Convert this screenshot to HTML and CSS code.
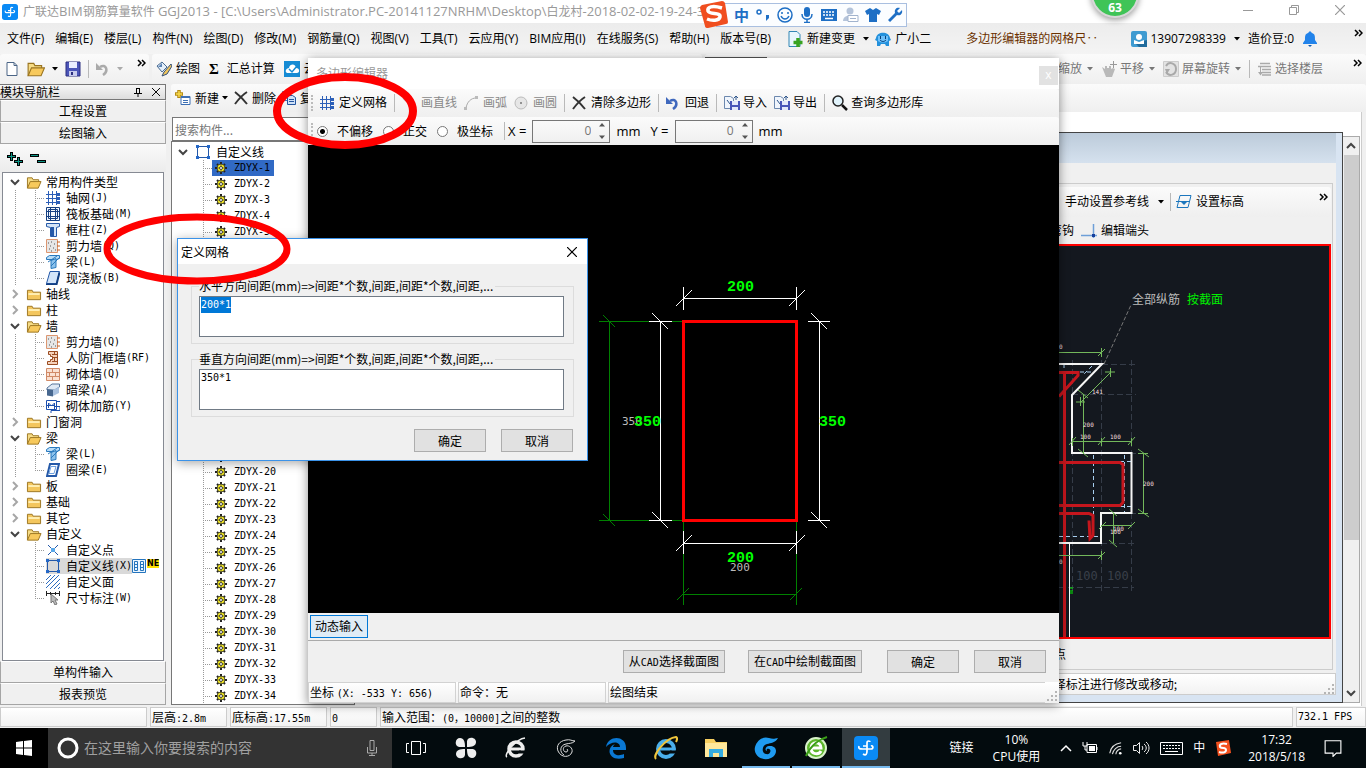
FILE: index.html
```html
<!DOCTYPE html>
<html lang="zh-CN">
<head>
<meta charset="utf-8">
<title>广联达BIM钢筋算量软件 GGJ2013</title>
<link rel="stylesheet" href="styles.css">
</head>
<body>
<svg class="defs" aria-hidden="true">
  <symbol id="i-open" viewBox="0 0 16 16"><path d="M1 14V3h5l1 2h6v3" fill="#f6dc86" stroke="#9a7420"/><path d="M1 14l3-7h11.500l-3 7z" fill="#f7c95c" stroke="#9a7420"/></symbol>
  <symbol id="i-folder" viewBox="0 0 16 16"><path d="M1 13.500V3.500h5l1 2h8v8z" fill="#f3c65d" stroke="#9a7420"/><path d="M2 6.500h12v2H2z" fill="#fff0b5"/></symbol>
  <symbol id="i-down" viewBox="0 0 12 12"><path d="M2 4l4 4 4-4" fill="none" stroke="#444" stroke-width="2"/></symbol>
  <symbol id="i-right" viewBox="0 0 12 12"><path d="M4 2l4 4-4 4" fill="none" stroke="#a6a6a6" stroke-width="2"/></symbol>
  <symbol id="i-grid" viewBox="0 0 14 14"><path d="M2.500 0v14M6.500 0v14M10.500 0v14M0 3.500h12M0 7.500h12M0 11.500h12" stroke="#2c5fb8" fill="none"/><path d="M11 2h3v3h-3zM11 6h3v3h-3zM11 10h3v3h-3z" fill="#2c5fb8"/></symbol>
  <symbol id="i-raft" viewBox="0 0 14 14"><path d="M.5.5h13v13H.5zM2.500 2.500h9v9h-9zM4.500 1v12M9.500 1v12M1 4.500h12M1 9.500h12" fill="#dce9fa" fill-opacity=".3" stroke="#153f82"/></symbol>
  <symbol id="i-col" viewBox="0 0 14 14"><path d="M.5.500h13v3l-3 1v9h-6v-9l-4-1z" fill="#d5e5f7" stroke="#2559a8"/><path d="M5 4h3v9H5z" fill="#2559a8"/></symbol>
  <symbol id="i-wall" viewBox="0 0 14 14"><path d="M.5.500h11v13H.5z" fill="#e6e6e6" stroke="#dc9670"/><path d="M2 4h1M5 3h1M8 5h1M4 7h1M7 9h1M3 10h1M9 11h1M5 12h1" stroke="#555"/><path d="M11 3h3M11 7h3M11 11h3" stroke="#c66325"/></symbol>
  <symbol id="i-beam" viewBox="0 0 14 14"><path d="M.5 4.500V2.500l3-2h10v3l-3 1z" fill="#b9dcf6" stroke="#2979bd"/><path d="M5 5.500l5-2v9l-5 1z" fill="#8cc2ec" stroke="#2979bd"/><path d="M2 7l9-6M5 11l8-8" stroke="#2979bd"/></symbol>
  <symbol id="i-slab" viewBox="0 0 14 14"><path d="M4 .5h9.500l-3 12H.5z" fill="#d4e6fa" stroke="#2559a8"/><path d="M.5 12.500v1h10l3-12" fill="none" stroke="#123f82" stroke-width="2"/></symbol>
  <symbol id="i-ring" viewBox="0 0 14 14"><path d="M4 1h9l-3 12H1z" fill="none" stroke="#2559a8" stroke-width="2"/><path d="M5 3.500h5l-2 7H3z" fill="#fff" stroke="#6da0df"/></symbol>
  <symbol id="i-door" viewBox="0 0 14 14"><path d="M2.500.500h9v13h-10v-3h3v-2h2v-3h-2v-2h-2z" fill="#f5d2ba" stroke="#9b4c22"/><path d="M6 3.500h5M6 6.500h5M6 10.500h5M8.500 1v2M8.500 7v3" stroke="#9b4c22"/></symbol>
  <symbol id="i-brick" viewBox="0 0 14 14"><path d="M.5 1.500h13v12H.5zM1 5.500h12M1 9.500h12M6.500 2v3M3.500 6v3M9.500 6v3M6.500 10v3" fill="#fae1d2" stroke="#d08a67"/></symbol>
  <symbol id="i-dark" viewBox="0 0 14 14"><path d="M1 5l5-4h7.500v3l-5 3H1z" fill="#dfe9f5" stroke="#56749a"/><path d="M1 6l6 1v6.500l-6-1z" fill="#47678f"/><path d="M7 7l6-3v6l-6 3z" fill="#aac2e0"/></symbol>
  <symbol id="i-rebar" viewBox="0 0 14 14"><path d="M.5 1.500h10v9H.5zM2.500 9V4l3 3 3-3v8M11 2.500h3M9 7.500h5v4H5v3M0 6.500h9" fill="none" stroke="#1c4fae"/></symbol>
  <symbol id="i-point" viewBox="0 0 14 14"><path d="M2 2l10 10M12 2L2 12" stroke="#2458a8"/><path d="M5 5h4v4H5z" fill="#59a7e9"/></symbol>
  <symbol id="i-line" viewBox="0 0 14 14"><path d="M1.500 1.500h11v11h-11z" fill="none" stroke="#2458a8"/><path d="M0 0h3v3H0zM11 0h3v3h-3zM0 11h3v3H0zM11 11h3v3h-3z" fill="#2468c8"/></symbol>
  <symbol id="i-area" viewBox="0 0 14 14"><path d="M0 5l5-5M0 9l9-9M0 13l13-13M4 14L14 4M8 14l6-6M12 14l2-2" stroke="#2c6cc0"/></symbol>
  <symbol id="i-dim" viewBox="0 0 14 14"><path d="M.5 0v5M13.500 0v5M0 2.500h14M4.500 1v3M9.500 1v3" stroke="#222"/><path d="M5 3v9l2-2 2 4 2-1-2-4h3z" fill="#bbb" stroke="#777"/></symbol>
  <symbol id="i-gear" viewBox="0 0 12 12"><path d="M6 0v12M0 6h12M2 2l8 8M10 2l-8 8" stroke="#222" stroke-width="2"/><circle cx="6" cy="6" r="4" fill="#f5ea1d" stroke="#333" stroke-width=".8"/><path d="M6 2v8M2 6h8" stroke="#333" stroke-width=".6"/><circle cx="6" cy="6" r="1.500" fill="#fff" stroke="#222" stroke-width=".8"/></symbol>
  <symbol id="i-caret" viewBox="0 0 6 4"><path d="M0 0h6L3 3.500z" fill="currentColor"/></symbol>
  <symbol id="i-more" viewBox="0 0 9 8"><path d="M1 1l3 3-3 3M5 1l3 3-3 3" fill="none" stroke="#000" stroke-width="1.500"/></symbol>
  <symbol id="i-del" viewBox="0 0 14 14"><path d="M1 1c4 3 8 7 12 12M13 1C8 4 4 9 1 13" fill="none" stroke="#333" stroke-width="2"/></symbol>
  <symbol id="i-undo" viewBox="0 0 14 14"><path d="M4 5c6-4 9 4 3 8" fill="none" stroke="currentColor" stroke-width="2.500"/><path d="M0 1v7h7z" fill="currentColor"/></symbol>
  <symbol id="i-close" viewBox="0 0 10 10"><path d="M0 0l10 10M10 0L0 10" stroke="currentColor" stroke-width="1.200"/></symbol>
  <symbol id="i-app" viewBox="0 0 24 24"><rect width="24" height="24" rx="4" fill="#0a8af5"/><path d="M9 18c3 2 4 0 4-3V7c0-3 3-2 3-1M5 10c-1 3 1 3 4 3h8c3 0 2-4 0-3M9 10h4" fill="none" stroke="#fff" stroke-width="1.700"/></symbol>
  <symbol id="i-disk" viewBox="0 0 16 16"><path d="M1 1h14v14H1z" fill="#4b55b8" stroke="#2c2f80"/><path d="M4 1h8v6H4z" fill="#e9edff"/><path d="M4 10h8v5H4z" fill="#c8ccee"/><path d="M6 11h2v3H6z" fill="#2c2f80"/></symbol>
  <symbol id="i-io" viewBox="0 0 16 16"><path d="M.5 1.500h6l3 2v10h-9z" fill="#f0f5fc" stroke="#6c88ae"/><path d="M6 6h10v9H6z" fill="#4b55b8"/><path d="M8 6h6v4H8zM8 12h6v3H8z" fill="#e6e8fa"/><path d="M3 5l3 4M12 5V1M10 3l2-2 2 2" fill="none" stroke="#2f568c"/></symbol>
  <symbol id="i-grip" viewBox="0 0 10 10"><path d="M8 8h2v2H8zM4 8h2v2H4zM0 8h2v2H0zM8 4h2v2H8zM4 4h2v2H4zM8 0h2v2H8z" fill="#b5b5b5"/></symbol>
  <symbol id="i-swirl" viewBox="0 0 24 24"><path d="M21 5c-3 0-5-2-9-1C5 5 2 10 4 15c3 7 12 7 14 1 1-4-3-7-6-6-4 1-3 6 0 6 2 0 2-2 1-3M21 5c-3 3-6 2-9 3-6 1-7 8-2 11" fill="none" stroke="currentColor"/></symbol>
</svg>

<header class="titlebar">
  <svg class="i16"><use href="#i-app"/></svg>
  <h1>广联达<span>BIM</span>钢筋算量软件 <span>GGJ2013 - [C:\Users\Administrator.PC-20141127NRHM\Desktop\</span>白龙村<span>-2018-02-02-19-24-35</span></h1>
  <div class="winbtns">
    <button aria-label="最小化"><svg viewBox="0 0 10 10"><path d="M0 5.500h10" stroke="currentColor"/></svg></button>
    <button aria-label="还原"><svg viewBox="0 0 10 10"><path d="M.5 2.500h7v7h-7zM2.500 2V.5h7v7H8" fill="none" stroke="currentColor"/></svg></button>
    <button aria-label="关闭"><svg><use href="#i-close"/></svg></button>
  </div>
</header>

<nav class="menubar">
  <div class="menus">
    <button>文件(F)</button><button>编辑(E)</button><button>楼层(L)</button><button>构件(N)</button><button>绘图(D)</button><button>修改(M)</button><button>钢筋量(Q)</button><button>视图(V)</button><button>工具(T)</button><button>云应用(Y)</button><button>BIM应用(I)</button><button>在线服务(S)</button><button>帮助(H)</button><button>版本号(B)</button>
  </div>
  <button class="tool"><svg class="i16" viewBox="0 0 16 16"><path d="M2 .5h8l3 3v12H2z" fill="#e8f6fd" stroke="#3386b5"/><path d="M11 7v9M6.500 11.500h9" stroke="#38a321" stroke-width="3.500"/></svg>新建变更<svg class="caret"><use href="#i-caret"/></svg></button>
  <button class="tool"><svg class="i16" viewBox="0 0 16 16"><path d="M1 7C2 0 14 0 15 7l1 2-2 1v5h-3l-1-2H6l-1 2H2v-5L0 9z" fill="#2491dc"/><path d="M3 5h10v5c-3 2-7 2-10 0z" fill="#6dc0fa"/><path d="M5.500 5v3M10.500 5v3M5 9c2 2 4 2 6 0" stroke="#063e77" fill="none"/></svg>广小二</button>
  <span class="marquee">多边形编辑器的网格尺‥</span>
  <div class="account">
    <button class="tool"><svg class="i16" viewBox="0 0 16 16"><rect width="16" height="16" rx="2" fill="#3f9bd1"/><path d="M16 9v7H8L4 12z" fill="#206b9c"/><circle cx="8" cy="6" r="3" fill="#fff"/><path d="M3 13V9l5 2 5-2v4z" fill="#fff"/></svg>13907298339<svg class="caret"><use href="#i-caret"/></svg></button>
    <span>造价豆:0</span>
    <svg class="i16" viewBox="0 0 16 16"><path d="M8 0l2 2c3 1 3 3 3 7l2 3v1H1v-1l2-3c0-4 0-6 3-7z" fill="#2283ea"/><path d="M6 14h4l-2 2z" fill="#115ab0"/></svg>
    <svg class="more"><use href="#i-more"/></svg>
  </div>
</nav>

<div class="toolbar">
  <div class="strip file-strip">
    <svg class="i16" viewBox="0 0 16 16"><path d="M3 1.500h7l3 3v10H3z" fill="#fff" stroke="#4b6586"/><path d="M10 1.500v3h3" fill="none" stroke="#4b6586"/></svg>
    <svg class="i18"><use href="#i-open"/></svg><svg class="caret"><use href="#i-caret"/></svg>
    <svg class="i16"><use href="#i-disk"/></svg><i class="sep"></i>
    <svg class="i14 dim"><use href="#i-undo"/></svg><svg class="caret dim"><use href="#i-caret"/></svg>
    <svg class="more"><use href="#i-more"/></svg>
  </div>
  <div class="strip calc-strip">
    <button class="tool"><svg class="i16" viewBox="0 0 16 16"><path d="M1 5l5-4 5 5-5 5z" fill="#e4effa" stroke="#496b91"/><path d="M2 6l4-4v4z" fill="#5a83b5"/><path d="M15 3l-7 8-2 4 5-2 5-8z" fill="#edc35b" stroke="#35527a"/></svg>绘图</button>
    <button class="tool"><b>Σ</b>汇总计算</button>
    <button class="tool"><svg class="i16" viewBox="0 0 16 16"><path d="M0 0h16v16H0z" fill="#168bd4"/><path d="M3 12c-3-2 0-5 2-5 1-5 7-4 7 0 4 0 4 5 1 5z" fill="#fff"/><path d="M5 8l3 3 5-6" fill="none" stroke="#168bd4" stroke-width="1.500"/></svg>云检查</button>
  </div>
  <div class="strip view-strip">
    <select aria-label="楼层"></select>
    <button class="tool">缩放<svg class="caret"><use href="#i-caret"/></svg></button>
    <button class="tool"><svg class="i16" viewBox="0 0 16 16"><path d="M1 6l3 2V5h2v2h2V5h2v3l2-1 2 1-3 8H5z" fill="#b9b9b9"/><path d="M12.500 0v7M9 3.500h7" stroke="#999"/></svg>平移<svg class="caret"><use href="#i-caret"/></svg></button>
    <button class="tool"><svg class="i16" viewBox="0 0 16 16"><path d="M.5.500h15v15H.5z" fill="#e3e3e3" stroke="#ccc"/><path d="M3 5c3-5 10-3 10 3s-7 8-10 3" fill="none" stroke="#a9a9a9" stroke-width="2"/><path d="M2 8h5l-3 5z" fill="#a9a9a9"/></svg>屏幕旋转<svg class="caret"><use href="#i-caret"/></svg></button>
    <i class="sep"></i>
    <button class="tool"><svg class="i14" viewBox="0 0 14 14"><path d="M2 1.500h10M0 4.500h13M4 7.500h9M4 10.500h9M4 13h9" stroke="#aaa" stroke-width="1.500"/><path d="M2 5v5H0l2.500 3.500L5 10H3V5z" fill="#aaa"/></svg>选择楼层</button>
    <svg class="more"><use href="#i-more"/></svg>
  </div>
</div>

<main class="work">
  <aside class="nav">
    <div class="nav-head"><span>模块导航栏</span><svg class="i10" viewBox="0 0 10 10"><path d="M3 1.500h4M3.500 1v5M6.500 1v5M1 6.500h8M5 7v3" stroke="#000"/></svg><svg class="i8"><use href="#i-close"/></svg></div>
    <button class="bar">工程设置</button>
    <button class="bar">绘图输入</button>
    <div class="nav-tools"><svg viewBox="0 0 40 16" width="40" height="16"><path d="M4.500 1v9M0 5.500h9M11.500 6v9M7 10.500h9M23 4.500h9M30 10.500h9" stroke="#000" stroke-width="3"/><path d="M4.500 2v7M1 5.500h7M11.500 7v7M8 10.500h7M24 4.500h7M31 10.500h7" stroke="#0c9485"/></svg></div>
    <ul class="tree">
      <li><div class="node"><svg><use href="#i-down"/></svg><svg><use href="#i-open"/></svg>常用构件类型</div>
        <ul>
          <li><svg><use href="#i-grid"/></svg>轴网<span class="m">(J)</span></li>
          <li><svg><use href="#i-raft"/></svg>筏板基础<span class="m">(M)</span></li>
          <li><svg><use href="#i-col"/></svg>框柱<span class="m">(Z)</span></li>
          <li><svg><use href="#i-wall"/></svg>剪力墙<span class="m">(Q)</span></li>
          <li><svg><use href="#i-beam"/></svg>梁<span class="m">(L)</span></li>
          <li><svg><use href="#i-slab"/></svg>现浇板<span class="m">(B)</span></li>
        </ul></li>
      <li><div class="node"><svg><use href="#i-right"/></svg><svg><use href="#i-folder"/></svg>轴线</div></li>
      <li><div class="node"><svg><use href="#i-right"/></svg><svg><use href="#i-folder"/></svg>柱</div></li>
      <li><div class="node"><svg><use href="#i-down"/></svg><svg><use href="#i-open"/></svg>墙</div>
        <ul>
          <li><svg><use href="#i-wall"/></svg>剪力墙<span class="m">(Q)</span></li>
          <li><svg><use href="#i-door"/></svg>人防门框墙<span class="m">(RF)</span></li>
          <li><svg><use href="#i-brick"/></svg>砌体墙<span class="m">(Q)</span></li>
          <li><svg><use href="#i-dark"/></svg>暗梁<span class="m">(A)</span></li>
          <li><svg><use href="#i-rebar"/></svg>砌体加筋<span class="m">(Y)</span></li>
        </ul></li>
      <li><div class="node"><svg><use href="#i-right"/></svg><svg><use href="#i-folder"/></svg>门窗洞</div></li>
      <li><div class="node"><svg><use href="#i-down"/></svg><svg><use href="#i-open"/></svg>梁</div>
        <ul>
          <li><svg><use href="#i-beam"/></svg>梁<span class="m">(L)</span></li>
          <li><svg><use href="#i-ring"/></svg>圈梁<span class="m">(E)</span></li>
        </ul></li>
      <li><div class="node"><svg><use href="#i-right"/></svg><svg><use href="#i-folder"/></svg>板</div></li>
      <li><div class="node"><svg><use href="#i-right"/></svg><svg><use href="#i-folder"/></svg>基础</div></li>
      <li><div class="node"><svg><use href="#i-right"/></svg><svg><use href="#i-folder"/></svg>其它</div></li>
      <li><div class="node"><svg><use href="#i-down"/></svg><svg><use href="#i-open"/></svg>自定义</div>
        <ul>
          <li><svg><use href="#i-point"/></svg>自定义点</li>
          <li><span class="current"><svg><use href="#i-line"/></svg>自定义线<span class="m">(X)</span></span><svg class="book" viewBox="0 0 14 14"><path d="M.5.500h13v13H.5z" fill="#eaf5ff" stroke="#2474bd"/><path d="M2.500 2.500h3v9h-3zM8.500 2.500h3v9h-3zM3 5.500h2M3 8.500h2M9 5.500h2M9 8.500h2" fill="none" stroke="#2474bd"/></svg><b class="new">NE</b></li>
          <li><svg><use href="#i-area"/></svg>自定义面</li>
          <li><svg><use href="#i-dim"/></svg>尺寸标注<span class="m">(W)</span></li>
        </ul></li>
    </ul>
    <button class="bar">单构件输入</button>
    <button class="bar">报表预览</button>
  </aside>

  <section class="parts">
    <div class="strip parts-tools">
      <button class="tool"><svg class="i16" viewBox="0 0 16 16"><path d="M6 6.500h9v8H6z" fill="#fff" stroke="#3d6fb4"/><path d="M6 7.500h9M8 10.500h5M8 12.500h5" stroke="#3d6fb4"/><path d="M4 0v8M0 4h8" stroke="#b58b13" stroke-width="3.500"/><path d="M4 1v6M1 4h6" stroke="#f8d94c" stroke-width="1.500"/></svg>新建<svg class="caret"><use href="#i-caret"/></svg></button>
      <button class="tool"><svg class="i14"><use href="#i-del"/></svg>删除</button>
      <button class="tool"><svg class="i14" viewBox="0 0 14 14"><path d="M.5.500h6l2 2v7h-8z" fill="#fff" stroke="#4371b2"/><path d="M5.500 4.500h5l3 2v7h-8z" fill="#cfe1f7" stroke="#2556a0"/><path d="M7 8.500h5M7 10.500h5" stroke="#2556a0"/></svg>复制</button>
    </div>
    <input class="find" type="text" placeholder="搜索构件..." aria-label="搜索构件">
    <div class="parts-tree">
      <div class="node"><svg><use href="#i-down"/></svg><svg><use href="#i-line"/></svg>自定义线</div>
      <ul>
        <li class="sel"><span><svg><use href="#i-gear"/></svg>ZDYX-1</span></li>
        <li><span><svg><use href="#i-gear"/></svg>ZDYX-2</span></li>
        <li><span><svg><use href="#i-gear"/></svg>ZDYX-3</span></li>
        <li><span><svg><use href="#i-gear"/></svg>ZDYX-4</span></li>
        <li><span><svg><use href="#i-gear"/></svg>ZDYX-5</span></li>
        <li><span><svg><use href="#i-gear"/></svg>ZDYX-6</span></li>
        <li><span><svg><use href="#i-gear"/></svg>ZDYX-7</span></li>
        <li><span><svg><use href="#i-gear"/></svg>ZDYX-8</span></li>
        <li><span><svg><use href="#i-gear"/></svg>ZDYX-9</span></li>
        <li><span><svg><use href="#i-gear"/></svg>ZDYX-10</span></li>
        <li><span><svg><use href="#i-gear"/></svg>ZDYX-11</span></li>
        <li><span><svg><use href="#i-gear"/></svg>ZDYX-12</span></li>
        <li><span><svg><use href="#i-gear"/></svg>ZDYX-13</span></li>
        <li><span><svg><use href="#i-gear"/></svg>ZDYX-14</span></li>
        <li><span><svg><use href="#i-gear"/></svg>ZDYX-15</span></li>
        <li><span><svg><use href="#i-gear"/></svg>ZDYX-16</span></li>
        <li><span><svg><use href="#i-gear"/></svg>ZDYX-17</span></li>
        <li><span><svg><use href="#i-gear"/></svg>ZDYX-18</span></li>
        <li><span><svg><use href="#i-gear"/></svg>ZDYX-19</span></li>
        <li><span><svg><use href="#i-gear"/></svg>ZDYX-20</span></li>
        <li><span><svg><use href="#i-gear"/></svg>ZDYX-21</span></li>
        <li><span><svg><use href="#i-gear"/></svg>ZDYX-22</span></li>
        <li><span><svg><use href="#i-gear"/></svg>ZDYX-23</span></li>
        <li><span><svg><use href="#i-gear"/></svg>ZDYX-24</span></li>
        <li><span><svg><use href="#i-gear"/></svg>ZDYX-25</span></li>
        <li><span><svg><use href="#i-gear"/></svg>ZDYX-26</span></li>
        <li><span><svg><use href="#i-gear"/></svg>ZDYX-27</span></li>
        <li><span><svg><use href="#i-gear"/></svg>ZDYX-28</span></li>
        <li><span><svg><use href="#i-gear"/></svg>ZDYX-29</span></li>
        <li><span><svg><use href="#i-gear"/></svg>ZDYX-30</span></li>
        <li><span><svg><use href="#i-gear"/></svg>ZDYX-31</span></li>
        <li><span><svg><use href="#i-gear"/></svg>ZDYX-32</span></li>
        <li><span><svg><use href="#i-gear"/></svg>ZDYX-33</span></li>
        <li><span><svg><use href="#i-gear"/></svg>ZDYX-34</span></li>
      </ul>
    </div>
  </section>

  <section class="stage">
    <div class="strip stage-strip"></div>
    <div class="stage-body">
      <div class="mdi">
        <div class="mdi-title"></div>
        <div class="mdi-inner">
          <div class="mdi-box">
            <div class="mdi-row strip">
              <button class="tool">手动设置参考线<svg class="caret"><use href="#i-caret"/></svg></button>
              <i class="sep"></i>
              <button class="tool"><svg class="i16" viewBox="0 0 16 16"><path d="M4 1.500h11l-3 12H1z M0 7.500h14" fill="none" stroke="#1b76bd"/><path d="M5 8h6l-3 3z" fill="#1b76bd"/></svg>设置标高</button>
              <svg class="more"><use href="#i-more"/></svg>
            </div>
            <div class="mdi-row second">
              <button class="tool">弯钩</button>
              <button class="tool"><svg class="i16" viewBox="0 0 16 16"><path d="M0 12.500h16M12.500 1v14" stroke="#6e9fd8" stroke-width="1.500"/><path d="M11 11h3v3h-3z" fill="#173f9b"/></svg>编辑端头</button>
            </div>
            <svg class="section-view" viewBox="1059 246 270 391" preserveAspectRatio="xMaxYMin meet">
              <path d="M1072.500 360v232M1101.500 360v234M1131.500 360v234M1102 364.500h34M1072 394.500h64M1131 453.500h5M1131 513.500h5M1101 543.500h35M1059 587.500h75" stroke="#353c48" stroke-dasharray="6 3" fill="none"/>
              <path d="M1104 364l27-59" stroke="#777" stroke-dasharray="4 2"/>
              <path d="M1059 536.500h42M1093.500 455v60M1124.500 455v58M1120 461.500h11M1120 506.500h11M1064 364v8M1080 372h14M1092 366l-8 8" stroke="#a8cff0" stroke-dasharray="4 3" fill="none"/>
              <g stroke="#c5161d" fill="none" stroke-width="3"><path d="M1064.500 372v266"/><path d="M1059 372.500h19v3l-19 21M1059 462.500h61l3 2v38l-3 3h-61M1059 513.500h30l4 2v20l-3 3-1-18"/></g>
              <path d="M1059 364h43l-30 31v58h59.500v60H1101v30h-42" fill="none" stroke="#f5f5f5" stroke-width="2"/><path d="M1069.500 543v95" stroke="#fff"/>
              <path d="M1059 352.500h43M1101.500 348v9M1098 356l7-7M1110 373l-30 30M1105 372h10M1110.500 368v9M1076 402h9M1080.500 397v9M1083.500 394v60M1078 390l10 8M1078 449l10 8M1072 441.500h60M1069 445l7-8M1098 445l7-8M1128 445l7-8M1072.500 438v8M1101.500 438v8M1131.500 438v8M1143.500 453v61M1138 449l11 8M1138 509l11 8M1138 453.500h10M1138 513.500h10M1101 525.500h31M1099 529l7-7M1128 529l7-7M1113.500 513v30M1109 509l8 7M1109 540l8 7M1059 555.500h43M1101.500 551v9M1098 559l7-7" stroke="#73b85b" fill="none"/>
              <g class="tiny"><text x="1092" y="394">141</text><text x="1083" y="427">200</text><text x="1080" y="439">100</text><text x="1110" y="439">100</text><text x="1143" y="486">200</text><text x="1113" y="531">100</text><text x="1110" y="534">100</text><text x="1059" y="349">0</text><text x="1059" y="564">0</text></g>
              <g class="faint"><text x="1076" y="580">100</text><text x="1107" y="580">100</text></g>
              <text class="note" x="1132" y="304">全部纵筋</text><text class="note go" x="1187" y="304">按截面</text>
              <path d="M1070 588h3M1070 591h3M1070 593h3" stroke="#00f000"/>
            </svg>
            <div class="hint"><span>删除点</span></div>
          </div>
          <div class="mdi-status"><span>选择标注进行修改或移动;</span><svg class="i10"><use href="#i-grip"/></svg></div>
        </div>
      </div>
      <div class="scroll"><svg><use href="#i-down"/></svg><i></i><svg><use href="#i-down"/></svg></div>
    </div>
  </section>
</main>

<footer class="status">
  <span></span><span>层高<span class="m">:2.8m</span></span><span>底标高<span class="m">:17.55m</span></span><span><span class="m">0</span></span><span>输入范围：<span class="m">(0，10000]</span>之间的整数</span><span class="m">732.1 FPS</span>
</footer>

<div class="taskbar">
  <button class="start" aria-label="开始"><svg viewBox="0 0 16 16"><path d="M0 2l7-1v6.500H0zM8 1l8-1v7.500H8zM0 8.500h7V15l-7-1zM8 8.500h8V16l-8-1z" fill="#fff"/></svg></button>
  <label class="search"><svg viewBox="0 0 22 22" width="22" height="22"><circle cx="11" cy="11" r="9" fill="none" stroke="#fff" stroke-width="3"/></svg><input type="text" placeholder="在这里输入你要搜索的内容"><svg viewBox="0 0 12 18" width="12" height="18"><path d="M4 1.500h4v10H4zM1.500 8v6h9V8M6 14v3M3 16.500h6" fill="none" stroke="#aaa"/></svg></label>
  <div class="apps">
    <button aria-label="任务视图"><svg viewBox="0 0 24 24"><path d="M7.500 5.500h9v13h-9zM5 7.500H2.500v9H5M19 7.500h2.500v9H19" fill="none" stroke="#fff"/></svg></button>
    <button aria-label="风车"><svg viewBox="0 0 24 24"><g fill="#eee"><path d="M11 11H5C0 10 1 2 6 2c4 0 5 4 5 9z"/><path d="M13 11V5c1-5 9-4 9 1 0 4-4 5-9 5z"/><path d="M13 13h6c5 1 4 9-1 9-4 0-5-4-5-9z"/><path d="M11 13v6c-1 5-9 4-9-1 0-4 4-5 9-5z"/></g></svg></button>
    <button aria-label="浏览器"><svg viewBox="0 0 24 24"><circle cx="12" cy="13" r="7" fill="none" stroke="#eee" stroke-width="3.500"/><path d="M5 13h14" stroke="#eee" stroke-width="3"/><path d="M15 16h6" stroke="#030b0e" stroke-width="3"/><path d="M3 21c-4-2 9-18 18-19" fill="none" stroke="#eee" stroke-width="1.500"/></svg></button>
    <button aria-label="旋风" class="grey"><svg><use href="#i-swirl"/></svg></button>
    <button aria-label="Edge"><svg viewBox="0 0 24 24"><path d="M2 11C4-1 22-1 22 12v2H9c0 6 7 6 11 4v4C5 26 1 12 11 8c-1 1-2 2-2 3h7c0-6-9-6-14 0z" fill="#0a78d4"/></svg></button>
    <button aria-label="Internet Explorer"><svg viewBox="0 0 24 24"><circle cx="12" cy="13" r="8" fill="none" stroke="#4aaeea" stroke-width="4"/><path d="M5 13h15" stroke="#4aaeea" stroke-width="3"/><path d="M16 16h7" stroke="#030b0e" stroke-width="3"/><path d="M2 23C-2 19 12 2 22 1c2 1 1 3 0 5" fill="none" stroke="#efc53c" stroke-width="2"/></svg></button>
    <button aria-label="文件管理器"><svg viewBox="0 0 24 24"><path d="M1 3h9l2 3h11v15H1z" fill="#f7cf60"/><path d="M1 7h22v14H1z" fill="#ffe89b"/><path d="M5 21v-8h14v8h-4v-4H9v4z" fill="#35ade2"/></svg></button>
    <button aria-label="旋风浏览器" class="open blue"><svg viewBox="0 0 24 24"><path d="M24 2c-3 5-7 5-11 6-5 1-6 9-1 10 4 1 6-4 3-5-2-1-3 1-2 2-3-1-1-5 2-5 9-1 9 9 2 12C8 26-1 19 1 11 3 4 9 0 15 2c3 1 5 1 9 0z" fill="currentColor"/></svg></button>
    <button aria-label="绿色浏览器" class="open"><svg viewBox="0 0 24 24"><circle cx="12" cy="12" r="10" fill="#5db62c" stroke="#d9f3cb" stroke-width="2"/><path d="M7 12h10c0-7-10-7-10 0s8 7 10 3" fill="none" stroke="#fff" stroke-width="3"/><path d="M2 20C7 9 16 3 23 1" stroke="#3a9e18" stroke-width="2" fill="none"/></svg></button>
    <button aria-label="广联达" class="open active"><svg><use href="#i-app"/></svg></button>
  </div>
  <div class="tray">
    <span>链接</span>
    <span class="two">10%<br>CPU使用</span>
    <svg viewBox="0 0 12 16" width="12" height="16"><path d="M1 11l5-5 5 5" fill="none" stroke="#fff" stroke-width="1.500"/></svg>
    <svg viewBox="0 0 16 16" width="16" height="16"><path d="M5 4.500h9.500v8H5z M15 7v3M1 2v4h4V2M3 6v4h2" fill="none" stroke="#fff"/><path d="M7 6h6v5H7z" fill="#fff"/></svg>
    <svg viewBox="0 0 16 16" width="14" height="16"><path d="M2 14C3 7 8 3 15 2M5 15c1-5 5-9 10-9M9 15c0-3 3-6 6-6" fill="none" stroke="#ddd" stroke-width="1.300"/><circle cx="14" cy="14" r="1.500" fill="#fff"/></svg>
    <svg viewBox="0 0 18 16" width="18" height="16"><path d="M1.500 5.500h3l3-3v11l-3-3h-3zM10 6c1 1 1 3 0 4M12 4c3 2 3 6 0 8M14 2c4 3 4 9 0 12" fill="none" stroke="#eee"/></svg>
    <svg viewBox="0 0 23 13" width="23" height="13"><path d="M.5.500h22v12H.5z" fill="none" stroke="#fff"/><path d="M3 3.500h17M3 6.500h17" stroke="#fff" stroke-dasharray="2 1"/><path d="M5 9.500h13" stroke="#fff"/></svg>
    <span>中</span>
    <svg viewBox="0 0 16 16" width="16" height="16"><path d="M1 2l13-2 2 13-13 3z" fill="#f4511e"/><path d="M12 4c-5-1-8 0-7 3 2 2 6 0 6 3s-4 3-7 2" fill="none" stroke="#fff" stroke-width="2"/></svg>
    <time class="two">17:32<br>2018/5/18</time>
    <svg viewBox="0 0 16 16" width="18" height="18"><path d="M1 1.500h14v11H11l-3 3v-3H1z" fill="none" stroke="#fff"/></svg>
  </div>
</div>

<section class="editor">
  <header class="editor-title"><h2>多边形编辑器</h2><button aria-label="关闭">x</button></header>
  <div class="strip row">
    <i class="grip"></i>
    <button class="tool"><svg class="i14"><use href="#i-grid"/></svg>定义网格</button><i class="sep"></i>
    <button class="tool off"><svg class="i14" viewBox="0 0 14 14"><path d="M1 2l3 3" stroke="#bbb" stroke-width="1.500"/></svg>画直线</button>
    <button class="tool off"><svg class="i14" viewBox="0 0 14 14"><path d="M2 12C3 6 7 2 12 2" fill="none" stroke="#aaa"/><path d="M0 11h3v3H0zM11 0h3v3h-3z" fill="#bbb"/></svg>画弧</button>
    <button class="tool off"><svg class="i14" viewBox="0 0 14 14"><circle cx="7" cy="7" r="6" fill="#e6e6e6" stroke="#bbb"/><circle cx="7" cy="7" r="1" fill="#777"/></svg>画圆</button><i class="sep"></i>
    <button class="tool"><svg class="i14"><use href="#i-del"/></svg>清除多边形</button><i class="sep"></i>
    <button class="tool"><svg class="i14 navy"><use href="#i-undo"/></svg>回退</button><i class="sep"></i>
    <button class="tool tight"><svg class="i16"><use href="#i-io"/></svg>导入</button>
    <button class="tool tight"><svg class="i16"><use href="#i-io"/></svg>导出</button><i class="sep"></i>
    <button class="tool tight"><svg class="i16" viewBox="0 0 16 16"><circle cx="6" cy="6" r="5" fill="#e1f3fb" stroke="#222" stroke-width="1.500"/><path d="M10 10l5 5" stroke="#111" stroke-width="2.500"/></svg>查询多边形库</button>
  </div>
  <div class="strip row opts">
    <i class="grip"></i>
    <label class="first"><input type="radio" name="mode" checked>不偏移</label>
    <label><input type="radio" name="mode">正交</label>
    <label><input type="radio" name="mode">极坐标</label>
    <i class="sep"></i>
    <label class="num">X =<span class="spin"><input type="text" value="0"><svg viewBox="0 0 6 16"><path d="M0 3.500L3 0l3 3.500zM0 12.500L3 16l3-3.500z" fill="#555"/></svg></span>mm</label>
    <label class="num">Y =<span class="spin"><input type="text" value="0"><svg viewBox="0 0 6 16"><path d="M0 3.500L3 0l3 3.500zM0 12.500L3 16l3-3.500z" fill="#555"/></svg></span>mm</label>
  </div>
  <svg class="drawing" viewBox="308 145 751 468">
    <path d="M599 321.500h84M599 520.500h84M609.500 321v200M603 315l12 12M603 514l12 12M683.500 522v83M796.500 522v83M683 594.500h114M677 600l12-12M790 600l12-12" stroke="#008000" fill="none"/>
    <path d="M683 298.500h114M683.500 287v23M796.500 287v23M676 306l16-16M789 306l16-16M683 543.500h114M683.500 531v23M796.500 531v23M676 551l16-16M789 551l16-16M660.500 321v200M649 321.500h23M649 520.500h23M652 313l16 16M652 512l16 16M819.500 321v200M808 321.500h22M808 520.500h22M811 313l16 16M811 512l16 16" stroke="#fff" fill="none"/>
    <path d="M683.500 321.500h113v199h-113z" fill="none" stroke="#f00" stroke-width="3"/>
    <g class="grey-dim"><text x="622" y="425">350</text><text x="730" y="571">200</text></g>
    <g class="green-dim"><text x="727" y="291">200</text><text x="634" y="426">350</text><text x="819" y="426">350</text><text x="727" y="562">200</text></g>
  </svg>
  <div class="dyn"><button>动态输入</button></div>
  <div class="actions"><button class="btn">从<span class="m">CAD</span>选择截面图</button><button class="btn">在<span class="m">CAD</span>中绘制截面图</button><button class="btn ok">确定</button><button class="btn ok">取消</button></div>
  <footer class="editor-status"><span>坐标 <span class="m">(X: -533 Y: 656)</span></span><span>命令：无</span><span>绘图结束</span><svg class="i10"><use href="#i-grip"/></svg></footer>
</section>

<form class="dialog">
  <header><h2>定义网格</h2><button type="button" aria-label="关闭"><svg class="i10"><use href="#i-close"/></svg></button></header>
  <fieldset><legend><label for="hz">水平方向间距(mm)=&gt;间距*个数,间距,间距*个数,间距,...</label></legend><textarea id="hz">200*1</textarea></fieldset>
  <fieldset><legend><label for="vt">垂直方向间距(mm)=&gt;间距*个数,间距,间距*个数,间距,...</label></legend><textarea id="vt">350*1</textarea></fieldset>
  <div class="dialog-btns"><button type="button" class="btn ok">确定</button><button type="button" class="btn ok">取消</button></div>
</form>

<div class="ime">
  <svg class="ime-logo" viewBox="0 0 28 28"><path d="M2 5l20-4q2 0 3 2l3 19q0 2-2 2l-18 4q-3 0-3-2L0 8q0-2 2-3z" fill="#f04e1f"/><path d="M22 8C12 5 7 7 8 11c2 4 13 1 12 6-1 4-8 4-13 2" fill="none" stroke="#fff" stroke-width="3.500"/></svg>
  <b>中</b>
  <svg viewBox="0 0 16 16"><circle cx="4" cy="5" r="2" fill="none" stroke="#1e6fc5" stroke-width="1.500"/><path d="M11 8h3v3l-3 3z" fill="#1e6fc5"/></svg>
  <svg viewBox="0 0 16 16"><circle cx="8" cy="8" r="7" fill="none" stroke="#1e6fc5" stroke-width="1.500"/><path d="M5 5v2M11 5v2M4 9c2 4 6 4 8 0" fill="none" stroke="#1e6fc5" stroke-width="1.500"/></svg>
  <svg viewBox="0 0 16 16"><rect x="5" width="6" height="10" rx="3" fill="#1e6fc5"/><path d="M3 7c0 7 10 7 10 0M8 12v4M5 15.500h6" fill="none" stroke="#1e6fc5" stroke-width="1.500"/></svg>
  <svg viewBox="0 0 16 16"><path d="M0 2h16v12H0z" fill="#1e6fc5"/><path d="M2 5h12M2 8h12" stroke="#fff" stroke-width="1.500" stroke-dasharray="2 1"/><path d="M4 11.500h8" stroke="#fff" stroke-width="1.500"/></svg>
  <svg viewBox="0 0 16 16"><circle cx="7" cy="4" r="3.500" fill="#b5c4da"/><path d="M0 14c0-7 12-7 13-2v2z" fill="#b5c4da"/><path d="M5 8.500h10v6H5zM7 11.500h6" fill="#fff" stroke="#a2b4ce"/></svg>
  <svg viewBox="0 0 16 16"><path d="M5 1l3 2 3-2 5 3-2 4-2-1v8H4V7L2 8 0 4z" fill="#1e6fc5"/></svg>
  <svg viewBox="0 0 16 16"><path d="M1 13l7-7c-1-4 2-6 5-5l-3 3 2 2 3-3c1 4-2 6-5 5l-7 7z" fill="#1e6fc5"/></svg>
</div>
<div class="ball">63</div>
<svg class="marks" viewBox="0 0 420 290" width="420" height="290" aria-hidden="true"><g fill="none" stroke="#f00" stroke-width="8"><ellipse cx="345" cy="111" rx="68" ry="34"/><ellipse cx="197" cy="249" rx="90" ry="32" stroke-width="7"/></g></svg>
<script src="app.js"></script>
</body>
</html>
```
FILE: styles.css
```css
* { box-sizing: border-box; }
html, body { height: 100%; }
body {
  margin: 0; display: flex; flex-direction: column; overflow: hidden; position: relative;
  background: #f0f0f0; color: #000; font: 12px/16px "Open Sans", "Noto Sans CJK SC", sans-serif; white-space: nowrap;
}
h1, h2 { margin: 0; font-size: 12px; font-weight: 400; }
ul { list-style: none; margin: 0; padding: 0; }
button, input, textarea { font: inherit; color: inherit; margin: 0; padding: 0; border: 0; background: none; border-radius: 0; }
svg { display: block; flex: none; }
.defs { position: absolute; width: 0; height: 0; }
.i18 { width: 18px; height: 18px; }
.i16 { width: 16px; height: 16px; }
.i14 { width: 14px; height: 14px; }
.i10 { width: 10px; height: 10px; }
.i8 { width: 8px; height: 8px; }
.caret { width: 6px; height: 4px; }
.more { width: 9px; height: 8px; }
.dim { color: #aaa; }
.navy { color: #3f68bd; }
.m { font: 10px/16px "DejaVu Sans Mono", "Noto Sans CJK SC", monospace; }
.sep { width: 1px; height: 18px; background: #b9b9b9; flex: none; }
.tool { display: flex; align-items: center; gap: 4px; }
.tool .caret { margin-left: 4px; }
.strip { display: flex; align-items: center; background: linear-gradient(#fbfbfb, #efefef); border-radius: 3px; }

.titlebar { display: flex; align-items: center; height: 23px; padding-left: 2px; gap: 5px; background: #fff; color: #999; flex: none; }
.titlebar h1 span { font-size: 13px; }
.winbtns { margin-left: auto; display: flex; gap: 35px; padding: 0 20px 3px 0; }
.winbtns svg { width: 10px; height: 10px; }
.winbtns button { width: 11px; }

.menubar { display: flex; align-items: center; height: 31px; padding-left: 7px; flex: none; background: linear-gradient(#ececec, #f4f4f4); }
.menus { display: flex; gap: 11px; margin-right: 16px; }
.menubar .tool { margin-right: 6px; }
.marquee { margin-left: 29px; color: #6b3100; }
.account { margin-left: auto; display: flex; align-items: center; padding-right: 3px; }
.account .tool { margin-right: 8px; }
.account > .i16 { margin-left: 8px; }
.account .more { margin: 0 0 12px 36px; }

.toolbar { display: flex; gap: 3px; height: 30px; flex: none; }
.toolbar .strip { padding: 0 4px; }
.file-strip { width: 149px; gap: 7px; }
.file-strip .more { margin: 0 0 12px 7px; }
.calc-strip { width: 550px; gap: 9px; flex: none; }
.calc-strip b { font: bold 15px/16px "Liberation Serif", serif; margin-right: 4px; }
.toolbar .view-strip { flex: 1; color: #777; gap: 8px; padding-left: 0; }
.view-strip select { width: 62px; height: 25px; margin-right: auto; border: 1px solid #555; border-radius: 0; background: #fff; }
.view-strip .tool { gap: 3px; }
.view-strip .tool .caret { margin-left: 2px; }
.view-strip .more { margin: 0 0 12px 22px; }

.work { flex: 1; min-height: 0; display: flex; font-family: "Noto Sans CJK SC", sans-serif; }
.nav { width: 166px; flex: none; display: flex; flex-direction: column; padding-bottom: 1px; }
.nav-head { display: flex; align-items: center; gap: 9px; height: 16px; padding-right: 5px; border: 1px solid #777; border-left: 0; background: linear-gradient(#f6f6f6, #ddd); }
.nav-head span { flex: 1; }
.bar { height: 22px; border: 1px solid #a5a5a5; border-top-color: #fff; background: #f0f0f0; flex: none; }
.nav-tools { height: 28px; padding: 7px 0 0 7px; background: linear-gradient(#fafafa, #ececec); }
.tree { flex: 1; min-height: 0; margin: 0 2px 0 2px; padding-top: 1px; border: 1px solid #868a93; background: #fff; }
.node { display: flex; align-items: center; height: 16px; padding-left: 6px; }
.node svg:first-child { width: 12px; height: 12px; margin-right: 5px; }
.node svg:nth-child(2) { width: 16px; height: 15px; margin-right: 4px; }
.tree ul li {
  display: flex; align-items: center; height: 16px; padding-left: 43px;
  background:
    repeating-linear-gradient(#999 0 1px, #fff 1px 2px) 12px 0 / 1px 16px no-repeat,
    repeating-linear-gradient(#999 0 1px, #fff 1px 2px) 32px 0 / 1px 16px no-repeat,
    repeating-linear-gradient(90deg, #999 0 1px, #fff 1px 2px) 32px 8px / 10px 1px no-repeat;
}
.tree ul li:last-child { background-size: 1px 16px, 1px 8px, 10px 1px; }
.tree > li:last-child ul li { background-size: 0 0, 1px 16px, 10px 1px; }
.tree > li:last-child ul li:last-child { background-size: 0 0, 1px 8px, 10px 1px; }
.tree ul svg { width: 14px; height: 14px; margin-right: 6px; }
.current { display: flex; align-items: center; background: #d9d9d9; }
.tree ul .book { margin: 0 1px 0 0; }
.new { height: 9px; margin-bottom: 6px; background: #ffe100; font: bold 8px/9px "DejaVu Sans", sans-serif; }

.parts { width: 184px; margin-left: 5px; flex: none; display: flex; flex-direction: column; }
.parts-tools { height: 28px; padding-left: 4px; gap: 6px; flex: none; }
.parts-tools .tool .caret { margin-left: -1px; }
.find { height: 24px; margin: 5px 0 0 1px; padding: 0 2px; border: 1px solid #777; background: #fff; flex: none; }
.find::placeholder { color: #777; opacity: 1; }
.parts-tree { flex: 1; min-height: 0; overflow: hidden; margin-bottom: 1px; padding-top: 2px; border: 1px solid #777; background: #fff; }
.parts-tree .node { padding-left: 5px; }
.parts-tree .node svg:first-child { margin-right: 7px; }
.parts-tree .node svg:nth-child(2) { width: 14px; height: 14px; margin-right: 6px; }
.parts-tree li {
  display: flex; height: 16px; padding-left: 40px;
  background:
    repeating-linear-gradient(#999 0 1px, #fff 1px 2px) 31px 0 / 1px 16px no-repeat,
    repeating-linear-gradient(90deg, #999 0 1px, #fff 1px 2px) 31px 8px / 9px 1px no-repeat;
}
.parts-tree li span { display: flex; align-items: center; gap: 7px; padding: 0 4px 0 3px; font: 10px/16px "DejaVu Sans Mono", monospace; }
.parts-tree li svg { width: 12px; height: 12px; }
.parts-tree .sel span { background: #316ac5; }

.stage { flex: 1; min-width: 0; display: flex; flex-direction: column; }
.stage-strip { height: 28px; flex: none; }
.stage-body { flex: 1; min-height: 0; display: flex; margin-right: 4px; padding: 20px 1px 3px 0; border-right: 1px solid #ccc; background: #fff; }
.mdi { flex: 1; min-width: 0; display: flex; flex-direction: column; padding: 0 6px 7px 0; border: 1px solid #444; border-left: 0; background: #d8e4f2; }
.mdi-title { height: 30px; flex: none; background: linear-gradient(#bccbda, #d5e1ee); }
.mdi-inner { flex: 1; min-height: 0; display: flex; flex-direction: column; gap: 3px; padding: 20px 0 0; background: #f0f0f0; }
.mdi-box { flex: 1; min-height: 0; display: flex; flex-direction: column; margin-right: 3px; padding: 3px 1px 1px 0; border: 1px solid #ccc; }
.mdi-row { display: flex; align-items: center; justify-content: flex-end; gap: 5px; height: 30px; flex: none; font-family: "Open Sans", "Noto Sans CJK SC", sans-serif; }
.mdi-row .tool .caret { margin: 0 1px 0 5px; }
.mdi-row .more { margin: 0 3px 10px 70px; }
.mdi-row.second { gap: 7px; height: 27px; padding-right: 182px; }
.section-view { flex: 1; min-height: 0; width: 100%; border: 2px solid #f00; background: #14181f; }
.tiny text { font: 6px "DejaVu Sans Mono", monospace; fill: #f1dede; }
.faint text { font: 12px "DejaVu Sans Mono", monospace; fill: #3a404a; }
.note { font: 12px "Noto Sans CJK SC", sans-serif; fill: #bbb; }
.go { fill: #00f000; }
.hint { height: 29px; flex: none; display: flex; justify-content: flex-end; align-items: center; padding-right: 265px; }
.mdi-status { height: 22px; flex: none; display: flex; align-items: center; justify-content: flex-end; padding-right: 1px; border: 1px solid #ccc; background: linear-gradient(#fff, #f2f2f2); }
.mdi-status .i10 { margin-left: 147px; align-self: flex-end; }
.scroll { width: 17px; flex: none; margin-top: 4px; display: flex; flex-direction: column; align-items: center; background: #f0f0f0; border: 1px solid #aaa; border-left: 0; }
.scroll i { width: 15px; height: 385px; margin-bottom: auto; background: #cdcdcd; }
.scroll svg { width: 12px; height: 18px; }
.scroll svg:first-child { transform: rotate(180deg); }

.status { display: flex; gap: 3px; height: 22px; padding-top: 1px; flex: none; font-family: "Noto Sans CJK SC", sans-serif; }
.status > span { display: block; height: 20px; padding-left: 1px; line-height: 18px; border: 1px solid #ccc; background: linear-gradient(#fff, #f2f2f2); }
.status > span:nth-child(1) { width: 147px; }
.status > span:nth-child(2) { width: 77px; }
.status > span:nth-child(3) { width: 97px; }
.status > span:nth-child(4) { width: 47px; }
.status > span:nth-child(5) { flex: 1; }
.status > span:nth-child(6) { width: 70px; }

.taskbar { height: 40px; flex: none; display: flex; background: #030b0e; color: #fff; }
.start { width: 48px; display: grid; place-items: center; background: #000; }
.start svg { width: 16px; height: 16px; }
.search { width: 344px; display: flex; align-items: center; gap: 5px; padding: 0 14px 0 9px; background: #333; }
.search input { flex: 1; min-width: 0; font-size: 14px; line-height: 20px; }
.search input::placeholder { color: #a0a0a0; opacity: 1; }
.apps { display: flex; gap: 2px; }
.apps button { width: 48px; display: grid; place-items: center; border-bottom: 2px solid transparent; border-top: 2px solid transparent; }
.apps svg { width: 24px; height: 24px; }
.apps .open { border-bottom-color: #76b9ed; }
.apps .active { background: #333c40; border-top-color: #333c40; }
.apps .grey { color: #ddd; }
.apps .blue { color: #1f9bf0; }
.tray { margin-left: auto; display: flex; align-items: center; gap: 10px; padding-right: 24px; background: #030b0e; }
.two { text-align: center; line-height: 17px; padding: 0 10px 0 9px; }
.tray time { padding: 0 9px 0 7px; }

.editor { position: absolute; left: 308px; top: 58px; width: 751px; height: 645px; display: flex; flex-direction: column; background: #f0f0f0; box-shadow: 0 2px 10px rgba(0, 0, 0, .45); }
.editor-title { height: 31px; flex: none; display: flex; align-items: center; padding: 0 1px 0 8px; background: #fff; color: #999; }
.editor-title button { margin-left: auto; margin-top: 3px; width: 19px; height: 19px; background: #e2e2e2; color: #fff; line-height: 16px; }
.row { height: 28px; flex: none; gap: 7px; padding-left: 3px; }
.row .tool { gap: 5px; }
.row .tight { gap: 3px; }
.grip { width: 0; height: 16px; border-left: 2px dotted #bbb; }
.off { color: #888; }
.opts label { display: flex; align-items: center; margin-left: 3px; font-family: "Noto Sans CJK SC", sans-serif; }
.opts .first { margin-left: -3px; }
.opts input[type=radio] { appearance: none; width: 11px; height: 11px; margin: 0 9px 0 0; border: 1px solid #777; border-radius: 50%; background: #fff; }
.opts input[type=radio]:checked { background: radial-gradient(#000 0 2px, #fff 3px); }
.opts .sep { margin: 0 -4px 0 4px; }
.opts .num { font: 13px/16px "Open Sans", sans-serif; gap: 6px; margin: 0 3px 0 0; }
.spin { display: flex; align-items: center; width: 78px; height: 23px; padding-right: 4px; border: 1px solid #777; }
.spin input { flex: 1; min-width: 0; text-align: right; margin-right: 8px; color: #777; font-size: 12px; }
.spin svg { width: 6px; height: 16px; }
.drawing { flex: 1; min-height: 0; width: 100%; background: #000; }
.green-dim text { font: bold 15px "Liberation Mono", monospace; fill: #0f0; }
.grey-dim text { font: 11px "DejaVu Sans Mono", monospace; fill: #bbb; }
.dyn { height: 28px; flex: none; padding: 2px; border-bottom: 1px solid #aaa; }
.dyn button { width: 58px; height: 23px; border: 1px solid #0078d7; background: #e0ecf6; }
.actions { height: 41px; flex: none; display: flex; align-items: center; justify-content: flex-end; padding-right: 13px; font-family: "Noto Sans CJK SC", sans-serif; }
.btn { height: 23px; padding: 0 5px; border: 1px solid #adadad; background: #e1e1e1; }
.actions .btn { margin-left: 23px; }
.actions .btn.ok { margin-left: 25px; }
.actions .btn.ok:last-child { margin-left: 15px; }
.btn.ok { width: 72px; }
.editor-status { height: 21px; flex: none; display: flex; gap: 2px; background: linear-gradient(#fff, #f0f0f0); font-family: "Noto Sans CJK SC", sans-serif; }
.editor-status > span { border: 1px solid #d2d2d2; padding-left: 1px; line-height: 18px; }
.editor-status > span:nth-child(1) { width: 148px; }
.editor-status > span:nth-child(2) { width: 148px; }
.editor-status > span:nth-child(3) { flex: 1; border-right: 0; }
.editor-status .i10 { align-self: flex-end; margin: 0 2px 2px 0; }

.dialog { position: absolute; left: 177px; top: 238px; width: 411px; height: 223px; border: 1px solid #3b92e8; background: #f0f0f0; box-shadow: 0 2px 10px rgba(0, 0, 0, .35); font-family: "Noto Sans CJK SC", sans-serif; }
.dialog header { display: flex; align-items: center; justify-content: space-between; height: 25px; padding: 0 10px 0 3px; background: #fff; }
.dialog fieldset { margin: 14px 13px 0; padding: 2px 9px 6px 7px; border: 1px solid #dcdcdc; min-width: 0; }
.dialog fieldset + fieldset { margin-top: 7px; }
.dialog legend { padding: 0 2px 0 0; height: 16px; }
.dialog textarea { display: block; width: 100%; height: 41px; padding: 0 1px; border: 1px solid #707a85; background: #fff; resize: none; outline: 0; font: 10px/16px "DejaVu Sans Mono", monospace; overflow: hidden; }
.dialog textarea::selection { background: #0078d7; color: #fff; }
.dialog-btns { display: flex; justify-content: flex-end; gap: 15px; padding: 12px 14px 0; }

.ime { position: absolute; left: 716px; top: 3px; height: 24px; width: 191px; display: flex; align-items: center; gap: 6px; padding-left: 17px; border: 1px solid #a9bfe0; background: #fbfdff; color: #1e6fc5; }
.ime svg { width: 16px; height: 16px; }
.ime b { font-size: 15px; font-weight: 700; }
.ime .ime-logo { position: absolute; left: -17px; top: -4px; width: 28px; height: 28px; }
.ball { position: absolute; left: 1091px; top: -30px; width: 48px; height: 48px; padding-top: 28px; border: 2px solid #d8d8d8; border-radius: 50%; background: #3fc457; color: #fff; font-weight: 700; text-align: center; box-shadow: 0 2px 6px rgba(0, 0, 0, .4); }
.marks { position: absolute; left: 0; top: 0; pointer-events: none; }
```
FILE: app.js
```js
// The first spacing field opens with its value selected.
var field = document.getElementById('hz');
field.focus();
field.select();
```
